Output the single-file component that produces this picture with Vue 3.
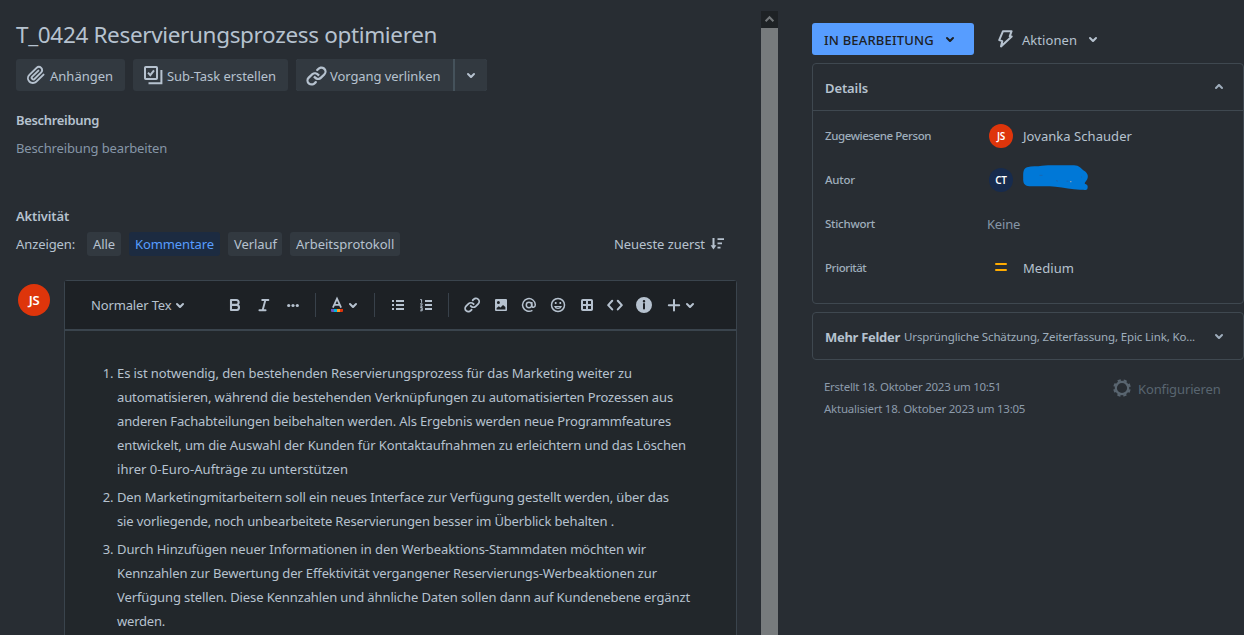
<script setup>
const filters = [
  { label: 'Alle', cls: 'f-all' },
  { label: 'Kommentare', cls: 'f-comments' },
  { label: 'Verlauf', cls: 'f-history' },
  { label: 'Arbeitsprotokoll', cls: 'f-log' },
]

// Each list item is a set of lines with its own tracking in px.
const items = [
  [
    ['Es ist notwendig, den bestehenden Reservierungsprozess für das Marketing weiter zu', -0.096],
    ['automatisieren, während die bestehenden Verknüpfungen zu automatisierten Prozessen aus', -0.126],
    ['anderen Fachabteilungen beibehalten werden. Als Ergebnis werden neue Programmfeatures', -0.144],
    ['entwickelt, um die Auswahl der Kunden für Kontaktaufnahmen zu erleichtern und das Löschen', -0.096],
    ['ihrer 0-Euro-Aufträge zu unterstützen', 0.045],
  ],
  [
    ['Den Marketingmitarbeitern soll ein neues Interface zur Verfügung gestellt werden, über das', -0.117],
    ['sie vorliegende, noch unbearbeitete Reservierungen besser im Überblick behalten .', -0.141],
  ],
  [
    ['Durch Hinzufügen neuer Informationen in den Werbeaktions-Stammdaten möchten wir', -0.079],
    ['Kennzahlen zur Bewertung der Effektivität vergangener Reservierungs-Werbeaktionen zur', -0.127],
    ['Verfügung stellen. Diese Kennzahlen und ähnliche Daten sollen dann auf Kundenebene ergänzt', -0.114],
    ['werden.', -0.2],
  ],
]

const chevron =
  'M8.292 10.293a1.009 1.009 0 000 1.419l2.939 2.965c.218.215.5.322.779.322s.556-.107.769-.322l2.93-2.955a1.01 1.01 0 000-1.419.987.987 0 00-1.406 0l-2.298 2.317-2.307-2.327a.99.99 0 00-1.406 0z'
const linkA =
  'M12.856 5.457l-.937.92a1.002 1.002 0 000 1.437 1.047 1.047 0 001.463 0l.984-.966c.967-.95 2.542-1.135 3.602-.288a2.54 2.54 0 01.203 3.81l-2.903 2.852a2.646 2.646 0 01-3.696 0l-1.11-1.09L9 13.57l1.108 1.089c1.822 1.788 4.802 1.788 6.622 0l2.905-2.852a4.558 4.558 0 00-.357-6.82c-1.893-1.517-4.695-1.226-6.422.47'
const linkB =
  'M11.144 19.543l.937-.92a1.002 1.002 0 000-1.437 1.047 1.047 0 00-1.462 0l-.985.966c-.967.95-2.542 1.135-3.602.288a2.54 2.54 0 01-.203-3.81l2.903-2.852a2.646 2.646 0 013.696 0l1.11 1.09L15 11.43l-1.108-1.089c-1.822-1.788-4.802-1.788-6.622 0l-2.905 2.852a4.558 4.558 0 00.357 6.82c1.893 1.517 4.695 1.226 6.422-.47'
const clip =
  'M11.643 17.965c-1.53 1.495-4.016 1.496-5.542.004a3.773 3.773 0 01.002-5.412l7.147-6.985a2.316 2.316 0 013.233-.003c.893.873.895 2.282.004 3.153l-6.703 6.55a.653.653 0 01-.914-.008.62.62 0 01.001-.902l6.229-6.087a.941.941 0 000-1.353.995.995 0 00-1.384 0l-6.23 6.087a2.502 2.502 0 000 3.607 2.643 2.643 0 003.683.009l6.703-6.55a4.074 4.074 0 00-.003-5.859 4.306 4.306 0 00-6.002.003l-7.148 6.985a5.655 5.655 0 00-.001 8.118c2.29 2.237 6.015 2.238 8.308-.004l7.204-7.04a.941.941 0 000-1.353.995.995 0 00-1.384 0l-7.204 7.04z'
</script>

<template>
  <div class="page">
    <main class="issue">
      <h1>T_0424 Reservierungsprozess optimieren</h1>

      <div class="actions">
        <button class="btn b-attach">
          <svg class="ic24" viewBox="0 0 24 24" fill="currentColor"><path :d="clip" /></svg>
          <span>Anhängen</span>
        </button>
        <button class="btn b-sub">
          <svg class="ic24" viewBox="0 0 24 24" fill="none" stroke="currentColor" stroke-width="2">
            <rect x="4" y="4" width="12" height="12" rx="0.8" />
            <path d="M7 9.6l2.3 2.5L13 7.4M20.4 7v13.2H7.5" />
          </svg>
          <span>Sub-Task erstellen</span>
        </button>
        <div class="split">
          <button class="btn b-link">
            <svg class="ic27" viewBox="0 0 24 24" fill="currentColor"><path :d="linkA" /><path :d="linkB" /></svg>
            <span>Vorgang verlinken</span>
          </button>
          <button class="btn b-more">
            <svg class="ic24" viewBox="0 0 24 24" fill="currentColor"><path :d="chevron" /></svg>
          </button>
        </div>
      </div>

      <h2 class="h-desc">Beschreibung</h2>
      <p class="desc">Beschreibung bearbeiten</p>

      <h2 class="h-act">Aktivität</h2>
      <div class="filters">
        <span class="show">Anzeigen:</span>
        <span v-for="f in filters" :key="f.label" class="tag" :class="f.cls">{{ f.label }}</span>
        <span class="sort">
          <span>Neueste zuerst</span>
          <svg width="15" height="14" viewBox="0 0 15 14" fill="none" stroke="currentColor" stroke-width="2">
            <path d="M3.5 1v9" /><path d="M0.6 8.2h5.8L3.5 12.4z" fill="currentColor" stroke="none" />
            <path d="M7.5 2.2H14M7.5 6.4h4.5M7.5 10.6h3" stroke-width="1.7" />
          </svg>
        </span>
      </div>

      <div class="composer">
        <div class="avatar big">JS</div>
        <section class="editor">
          <div class="toolbar">
            <span class="style">Normaler Tex</span>
            <svg class="ic24 chev-style" viewBox="0 0 24 24" fill="currentColor"><path :d="chevron" /></svg>

            <svg class="slot s-bold" viewBox="0 0 24 24" fill="none" stroke="currentColor" stroke-width="2.1">
              <path d="M8 7h5.2a2.4 2.4 0 010 4.9H8zM8 11.9h5.900a2.6 2.6 0 010 5.1H8z" stroke-linejoin="round" />
            </svg>
            <svg class="slot" viewBox="0 0 24 24" fill="none" stroke="currentColor" stroke-width="1.9" stroke-linecap="round">
              <path d="M10.2 7h6.2M7.4 17.2h6.2M13.4 7l-2.8 10.2" />
            </svg>
            <svg class="slot" viewBox="0 0 24 24" fill="currentColor">
              <circle cx="7.7" cy="12.5" r="1.6" /><circle cx="12" cy="12.5" r="1.6" /><circle cx="16.3" cy="12.5" r="1.6" />
            </svg>
            <i class="sep sep1"></i>
            <svg class="slot s-color" viewBox="0 0 24 24" fill="none">
              <path d="M7.900 14.6L12 5.6l4.1 9M9.3 11.8h5.4" stroke="currentColor" stroke-width="1.8" />
              <path d="M6 16h3v3H7a1 1 0 01-1-1z" fill="#6554c0" /><path d="M9 16h3v3H9z" fill="#00b8d9" />
              <path d="M12 16h3v3h-3z" fill="#ff991f" /><path d="M15 16h3v2a1 1 0 01-1 1h-2z" fill="#de350b" />
            </svg>
            <svg class="ic24 chev-color" viewBox="0 0 24 24" fill="currentColor"><path :d="chevron" /></svg>
            <i class="sep sep2"></i>
            <svg class="slot s-list" viewBox="0 0 24 24" fill="currentColor">
              <path d="M10 7h8v2h-8zM10 11h8v2h-8zM10 15h8v2h-8zM6 7h2v2H6zM6 11h2v2H6zM6 15h2v2H6z" />
            </svg>
            <svg class="slot s-num" viewBox="0 0 24 24" fill="currentColor">
              <path d="M11 7h7v2h-7zM11 11h7v2h-7zM11 15h7v2h-7z" />
              <path d="M6.2 6.6h1.4v3.2M6 10.9h2.4L6.6 13.3h2M6.2 14.6h2v3.2h-2M6.6 16.2h1.6" fill="none" stroke="currentColor" stroke-width="1" />
            </svg>
            <i class="sep sep3"></i>
            <svg class="slot s-link" viewBox="0 0 24 24" fill="currentColor">
              <g transform="translate(1.6 1) scale(.88)"><path :d="linkA" /><path :d="linkB" /></g>
            </svg>
            <svg class="slot" viewBox="0 0 24 24" fill="currentColor">
              <path fill-rule="evenodd" d="M7 6h10a1 1 0 011 1v10a1 1 0 01-1 1H7a1 1 0 01-1-1V7a1 1 0 011-1zm2.4 1.9a1.5 1.5 0 100 3 1.5 1.5 0 000-3zM7.6 16.4h8.8v-2.3l-2.4-2-2.5 2.4-1.7-1.3-2.2 1.8z" />
            </svg>
            <svg class="slot" viewBox="0 0 24 24" fill="none" stroke="currentColor" stroke-width="1.5">
              <circle cx="12" cy="12" r="2.7" />
              <path d="M14.8 8.9v3.7c0 2.4 3.5 2.2 3.5-.8a6.35 6.35 0 10-2.9 5.5" />
            </svg>
            <svg class="slot" viewBox="0 0 24 24" fill="none" stroke="currentColor" stroke-width="1.5">
              <circle cx="12" cy="12" r="6.5" /><path d="M8.9 13.6c.8 2.5 5.4 2.5 6.2 0z" stroke-width="1.2" />
              <path d="M9.7 9v2M14.3 9v2" stroke-width="1.7" />
            </svg>
            <svg class="slot" viewBox="0 0 24 24" fill="none" stroke="currentColor" stroke-width="2">
              <rect x="7" y="7" width="10" height="10" rx="0.8" /><path d="M12 7v10M7 12h10" />
            </svg>
            <svg class="slot" viewBox="0 0 24 24" fill="none" stroke="currentColor" stroke-width="2.1" stroke-linecap="round" stroke-linejoin="round">
              <path d="M9.2 7.8L5.2 12.1l4 4.3M14.8 7.8l4 4.3-4 4.3" />
            </svg>
            <svg class="slot" viewBox="0 0 24 24" fill="currentColor">
              <path fill-rule="evenodd" d="M12 4a8 8 0 110 16 8 8 0 010-16zm-1 7v4.5a1 1 0 002 0V11a1 1 0 00-2 0zm1-4.1a1.25 1.25 0 100 2.5 1.25 1.25 0 000-2.5z" />
            </svg>
            <svg class="slot s-plus" viewBox="0 0 24 24" fill="none" stroke="currentColor" stroke-width="2" stroke-linecap="round">
              <path d="M12 7v10.6M6.8 12.3h10.4" />
            </svg>
            <svg class="ic24 chev-plus" viewBox="0 0 24 24" fill="currentColor"><path :d="chevron" /></svg>
          </div>

          <ol class="content">
            <li v-for="(lines, i) in items" :key="i">
              <span v-for="[text, track] in lines" :key="text" class="line" :style="{ letterSpacing: track + 'px' }">{{ text }}</span>
            </li>
          </ol>
        </section>
      </div>
    </main>

    <div class="scrollbar">
      <div class="up">
        <svg width="17" height="17" viewBox="0 0 17 17" fill="none" stroke="#73777a" stroke-width="2"><path d="M4.6 10.3l3.9-4 3.9 4" /></svg>
      </div>
      <div class="thumb"></div>
    </div>

    <aside class="side">
      <div class="statusrow">
        <button class="status">
          <span>IN BEARBEITUNG</span>
          <svg class="ic24" viewBox="0 0 24 24" fill="currentColor"><path :d="chevron" /></svg>
        </button>
        <svg class="bolt" viewBox="0 0 24 24" fill="none" stroke="currentColor" stroke-width="2" stroke-linejoin="round">
          <path d="M9 4.2h8.6l-1.9 5.2h2L7 19.4l1.3-5.3-3.1-1z" />
        </svg>
        <span class="act">Aktionen</span>
        <svg class="ic24 chev-act" viewBox="0 0 24 24" fill="currentColor"><path :d="chevron" /></svg>
      </div>

      <section class="card details">
        <header>
          <h3>Details</h3>
          <svg class="ic24 flip" viewBox="0 0 24 24" fill="currentColor"><path :d="chevron" /></svg>
        </header>
        <div class="row">
          <span class="label l-person">Zugewiesene Person</span>
          <span class="avatar small">JS</span>
          <span class="value">Jovanka Schauder</span>
        </div>
        <div class="row">
          <span class="label l-author">Autor</span>
          <span class="avatar small navy">CT</span>
          <svg class="scribble" viewBox="0 0 68 28">
            <path d="M5 3.3c5-1.8 10-.5 15-1.6C29 .6 42 1.5 51 1.2c6-.5 8 3.4 11.5 5.8 3 2 4.2 5 2.7 8.3-.8 2-2.8 3.2-2.4 4.500 2.7.8 3.6 2.3 2.5 5.2-1.2 1.7-4.3.5-7.3.8-8-.2-16-2.3-24.5-3-7-.8-16-.2-26-.6C1.8 21.8 1 18.5 1.200 14 1.3 9.5.6 5.2 5 3.3z" fill="#0078d7" />
            <path d="M17.5 11.3h3M34 16.5l2 .8M44.5 17.2h2M59.5 12.5v1" stroke="#1668b4" fill="none" />
            <path d="M48 17.7h1.5" stroke="#93a9bd" fill="none" />
          </svg>
        </div>
        <div class="row">
          <span class="label l-key">Stichwort</span>
          <span class="none">Keine</span>
        </div>
        <div class="row">
          <span class="label l-prio">Priorität</span>
          <span class="prio"><i></i><i></i></span>
          <span class="value">Medium</span>
        </div>
      </section>

      <section class="card more">
        <h3>Mehr Felder</h3>
        <span class="hint">Ursprüngliche Schätzung, Zeiterfassung, Epic Link, Ko...</span>
        <svg class="ic24" viewBox="0 0 24 24" fill="currentColor"><path :d="chevron" /></svg>
      </section>

      <footer class="meta">
        <div class="dates">
          <p class="created">Erstellt 18. Oktober 2023 um 10:51</p>
          <p class="updated">Aktualisiert 18. Oktober 2023 um 13:05</p>
        </div>
        <div class="config">
          <svg width="20" height="20" viewBox="0 0 20 20" fill="none" stroke="currentColor">
            <circle cx="10" cy="10" r="6.2" stroke-width="2.2" />
            <circle cx="10" cy="10" r="7.8" stroke-width="2" stroke-dasharray="3.2 2.926" stroke-dashoffset="-1.46" />
          </svg>
          <span>Konfigurieren</span>
        </div>
      </footer>
    </aside>
  </div>
</template>

<style>
body { background: #282d33; }
</style>

<style scoped>
.page {
  display: flex;
  width: 1244px;
  height: 635px;
  overflow: hidden;
  background: #282d33;
  color: #b6c2cf;
  font-family: "Noto Sans", "Open Sans", sans-serif;
  font-size: 13px;
  line-height: 20px;
  white-space: nowrap;
}
* { box-sizing: border-box; }
h1, h2, h3, p, ol { margin: 0; padding: 0; }
button { border: 0; padding: 0; font: inherit; color: inherit; }
svg { display: block; flex: none; }
.ic24 { width: 24px; height: 24px; }
.ic27 { width: 27px; height: 27px; }

.issue { width: 761px; flex: none; padding: 20px 0 0 16px; }
h1 { font-size: 22.5px; font-weight: 400; line-height: 30px; letter-spacing: -0.34px; }
.actions { display: flex; gap: 8px; margin-top: 9px; }
.btn { display: flex; align-items: center; height: 32px; background: #323940; border-radius: 3px; }
.btn span { padding-top: 2px; }
.b-attach { width: 109px; padding-left: 8px; gap: 2px; }
.b-sub { width: 155px; padding-left: 8px; gap: 2px; letter-spacing: -0.05px; }
.split { display: flex; gap: 2px; background: #45525b; border-radius: 3px; }
.b-link { width: 157px; padding-left: 7px; letter-spacing: -0.08px; border-radius: 3px 0 0 3px; }
.b-more { width: 32px; justify-content: center; border-radius: 0 3px 3px 0; }
h2 { font-size: 13px; font-weight: 600; line-height: 20px; letter-spacing: -0.33px; }
.h-desc { margin-top: 19px; }
.desc { margin-top: 8px; color: #8696a7; letter-spacing: -0.14px; }
.h-act { margin-top: 48px; letter-spacing: -0.14px; }
.filters { display: flex; align-items: center; height: 24px; margin-top: 6px; }
.show { width: 71px; letter-spacing: -0.1px; }
.tag { height: 24px; line-height: 24px; padding-left: 6px; margin-right: 8px; border-radius: 3px; background: #323940; }
.f-all { width: 34px; letter-spacing: -0.09px; }
.f-comments { width: 91px; background: #1c2b41; color: #579dff; letter-spacing: -0.1px; }
.f-history { width: 54px; letter-spacing: -0.06px; }
.f-log { width: 110px; }
.sort { display: flex; align-items: center; margin-left: 206px; gap: 4.5px; letter-spacing: -0.07px; }

.composer { display: flex; margin-top: 24px; padding-left: 2px; }
.avatar { display: flex; align-items: center; justify-content: center; border-radius: 50%; background: #de350b; color: #fff; font-weight: 600; flex: none; }
.big { width: 32px; height: 32px; margin-top: 4px; font-size: 13px; letter-spacing: -0.3px; }
.editor { width: 673px; height: 400px; margin-left: 14px; border: 1px solid #3a444d; border-radius: 3px 3px 0 0; background: #22272b; }
.toolbar { display: flex; align-items: center; height: 50px; padding-left: 26px; background: #1d2125; border-bottom: 2px solid #3a444d; }
.style { width: 81px; letter-spacing: -0.15px; }
.chev-style { margin-left: -4px; }
.slot { width: 24px; height: 24px; margin-right: 4.7px; }
.s-bold { margin-left: 31px; margin-right: 5px; }
.sep { width: 1px; height: 24px; background: #38414a; }
.sep1 { margin-left: 6px; }
.s-color { margin-left: 9px; margin-right: 0; }
.chev-color { margin-left: -8px; }
.sep2 { margin-left: 9px; }
.s-list { margin-left: 11px; margin-right: 4px; }
.s-num { margin-right: 0; }
.sep3 { margin-left: 10px; }
.s-link { margin-left: 11px; margin-right: 4.3px; }
.s-plus { margin-right: 0; margin-left: 0.8px; }
.chev-plus { margin-left: -8px; }
.content { padding: 30px 0 0 52px; line-height: 24px; }
.content li { margin-bottom: 4px; }
.line { display: block; }

.scrollbar { width: 17px; flex: none; display: flex; flex-direction: column; padding-top: 11px; }
.up { height: 17px; background: #1e2225; }
.thumb { flex: 1; background: #777b7d; }

.side { width: 432px; flex: none; margin-left: 34px; padding-top: 23px; }
.statusrow { display: flex; align-items: center; height: 32px; }
.status { display: flex; align-items: center; width: 162px; height: 32px; padding-left: 12px; gap: 4px; border-radius: 3px; background: #579dff; color: #1d2125; font-weight: 500; letter-spacing: 0.19px; }
.status span, .act { padding-top: 2px; }
.bolt { width: 24px; height: 24px; margin-left: 20px; }
.act { width: 55px; margin-left: 4px; letter-spacing: 0.05px; }
.chev-act { margin-left: 4px; }
.card { border: 1px solid #3f4850; border-radius: 4px; width: 432px; }
.details { height: 241px; margin-top: 8px; }
.details header { display: flex; align-items: center; justify-content: space-between; height: 47px; padding: 2px 12px 0 12px; border-bottom: 1px solid #3f4850; margin-bottom: 3px; }
h3 { font-size: 13px; font-weight: 600; letter-spacing: -0.1px; }
.flip { transform: rotate(180deg); margin-top: -2px; color: #9fadbc; }
.row { display: flex; align-items: center; height: 44px; padding-left: 12px; }
.label { width: 164px; font-size: 11.5px; font-weight: 500; color: #9fadbc; }
.l-person { letter-spacing: -0.42px; }
.l-author { letter-spacing: -0.2px; }
.l-key { letter-spacing: -0.25px; }
.l-prio { letter-spacing: -0.45px; }
.small { width: 24px; height: 24px; font-size: 10px; letter-spacing: -0.2px; }
.navy { background: #172b4d; }
.value { margin-left: 10px; letter-spacing: 0.05px; }
.none { margin-left: -2px; color: #8696a7; letter-spacing: -0.2px; }
.scribble { width: 68px; height: 28px; margin: -5px 0 0 9px; }
.prio { display: flex; flex-direction: column; gap: 4px; width: 24px; padding-left: 6px; margin-top: -2px; }
.prio i { width: 12px; height: 2px; background: #ffab00; border-radius: 1px; }
.more { display: flex; align-items: center; height: 48px; margin-top: 8px; padding-left: 12px; }
.more h3 { width: 79px; padding-top: 2px; font-weight: 700; letter-spacing: -0.29px; }
.more .ic24 { margin-left: 12px; color: #9fadbc; }
.hint { width: 291px; padding-top: 2px; font-size: 11.5px; color: #9fadbc; letter-spacing: -0.14px; }
.meta { display: flex; padding-left: 12px; margin-top: 16px; }
.dates { width: 288px; font-size: 11.5px; line-height: 22px; color: #8c9bab; }
.created { letter-spacing: -0.28px; }
.updated { letter-spacing: -0.24px; }
.config { display: flex; align-items: center; height: 24px; margin-top: 1px; gap: 6px; color: #596570; letter-spacing: -0.13px; }
.config svg { margin-top: -2px; }
</style>
